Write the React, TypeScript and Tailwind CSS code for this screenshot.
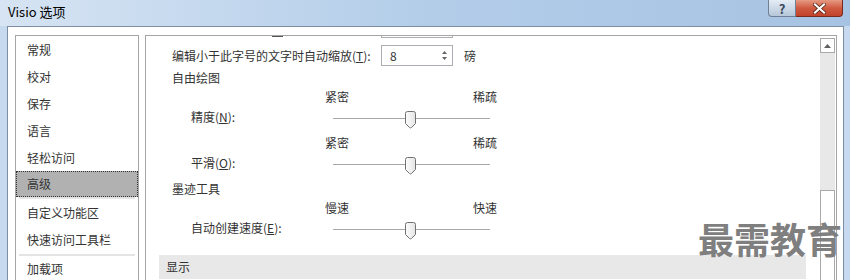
import React from 'react';

const NAV_ITEMS = ['常规', '校对', '保存', '语言', '轻松访问'];

function Thumb() {
  return (
    <svg width="12" height="18" viewBox="0 0 12 18" className="absolute left-[72px] top-[6px]">
      <defs>
        <linearGradient id="thumbFill" x1="0" y1="0" x2="1" y2="0">
          <stop offset="0" stopColor="#fdfdfd" />
          <stop offset="1" stopColor="#e4e4e4" />
        </linearGradient>
      </defs>
      <path
        d="M0.5 2.5 Q0.5 0.5 2.5 0.5 H8.5 Q10.5 0.5 10.5 2.5 V12.5 L6.5 16.5 Q5.5 17.3 4.5 16.5 L0.5 12.5 Z"
        fill="url(#thumbFill)"
        stroke="#707070"
      />
    </svg>
  );
}

function SliderGroup({ label, left, right }: { label: React.ReactNode; left: string; right: string }) {
  return (
    <div className="flex flex-col">
      <div className="flex h-[16px] items-center pl-[26px]">
        <div className="w-[153px]" />
        <div className="flex w-[172px] justify-between">
          <span>{left}</span>
          <span>{right}</span>
        </div>
      </div>
      <div className="flex h-[24px] items-center pl-[26px]">
        <div className="w-[153px] pl-[19px]">{label}</div>
        <div className="relative ml-[8px] h-[24px] w-[157px]">
          <div className="mt-[13px] h-px w-full bg-[#a8a8a8]" />
          <Thumb />
        </div>
      </div>
    </div>
  );
}

export default function App() {
  return (
    <div className="relative h-[280px] w-[850px] overflow-hidden bg-[#c6d9ee] font-['Noto_Sans_CJK_SC',sans-serif] text-[12px] text-[#333]">
      {/* title bar */}
      <div className="flex h-[26px] bg-gradient-to-r from-[#d6e4f3] via-[#b3cde9] to-[#a7c3e3]">
        <div className="pl-[8px] pt-[4px] text-[13px] leading-[16px] text-black">Visio 选项</div>
        <div className="ml-auto mr-[7px] flex h-[17px]">
          <div className="flex w-[28px] items-center justify-center rounded-bl-[4px] border border-t-0 border-[#6f8096] bg-gradient-to-b from-[#e4ecf5] to-[#b6c7da] text-[13px] font-bold leading-none text-[#3c4a5c]">
            ?
          </div>
          <div className="flex w-[47px] items-center justify-center rounded-br-[4px] border border-l-0 border-t-0 border-[#7a2a1c] bg-gradient-to-b from-[#e69a84] via-[#cf5a40] to-[#c0432a]">
            <svg width="13" height="11" viewBox="0 0 13 11">
              <path d="M2 1.5 L11 9.5 M11 1.5 L2 9.5" stroke="#4a1a10" strokeWidth="3.6" strokeLinecap="square" />
              <path d="M2 1.5 L11 9.5 M11 1.5 L2 9.5" stroke="#fff" strokeWidth="2.2" strokeLinecap="square" />
            </svg>
          </div>
        </div>
      </div>

      {/* window body */}
      <div className="flex h-[254px] pl-[7px] pr-[6px]">
        <div className="flex flex-1 gap-[6px] border-x border-t border-[#7d8ea3] bg-white pl-[7px] pr-[6px] pt-[8px]">
          {/* left nav */}
          <div className="flex w-[124px] flex-col border border-b-0 border-[#a5a5a5]">
            {NAV_ITEMS.map((item) => (
              <div key={item} className="flex h-[27px] items-center pl-[11px]">
                {item}
              </div>
            ))}
            <div className="flex h-[26px] items-center border border-dotted border-[#333] bg-[#b1b1b1] pl-[10px]">高级</div>
            <div className="mx-[3px] h-[2px] bg-[#e4e4e4]" />
            <div className="mt-px flex h-[26px] items-center pl-[11px]">自定义功能区</div>
            <div className="flex h-[27px] items-center pl-[11px]">快速访问工具栏</div>
            <div className="mx-[3px] mt-px h-[2px] bg-[#e4e4e4]" />
            <div className="mt-px flex h-[23px] items-center pl-[11px]">加载项</div>
          </div>

          {/* right content */}
          <div className="flex flex-1 border border-b-0 border-[#a5a5a5]">
            <div className="flex flex-1 flex-col">
              <div className="flex h-[2px] pl-[126px]">
                <div className="h-[1px] w-[11px] bg-[#555]" />
                <div className="ml-[98px] h-[2px] w-[72px] border-x border-b border-[#abadb3]" />
              </div>
              <div className="mt-[7px] flex h-[21px] items-center pl-[26px]">
                <div className="w-[209px]">
                  编辑小于此字号的文字时自动缩放(<u>T</u>):
                </div>
                <div className="flex h-[21px] w-[72px] items-center border border-[#abadb3] pl-[8px] pr-[4px]">
                  <span className="flex-1">8</span>
                  <svg width="7" height="13" viewBox="0 0 7 13">
                    <path d="M3.5 2 L6 5 H1 Z" fill="#666" />
                    <path d="M3.5 11 L6 8 H1 Z" fill="#666" />
                  </svg>
                </div>
                <span className="ml-[11px]">磅</span>
              </div>
              <div className="mt-[2px] flex h-[20px] items-center pl-[26px]">自由绘图</div>
              <div className="mt-px">
                <SliderGroup
                  label={
                    <>
                      精度(<u>N</u>):
                    </>
                  }
                  left="紧密"
                  right="稀疏"
                />
              </div>
              <div className="mt-[6px]">
                <SliderGroup
                  label={
                    <>
                      平滑(<u>O</u>):
                    </>
                  }
                  left="紧密"
                  right="稀疏"
                />
              </div>
              <div className="mt-[4px] flex h-[20px] items-center pl-[26px]">墨迹工具</div>
              <div className="mt-px">
                <SliderGroup
                  label={
                    <>
                      自动创建速度(<u>E</u>):
                    </>
                  }
                  left="慢速"
                  right="快速"
                />
              </div>
              <div className="mx-[13px] mt-[15px] flex h-[24px] items-center bg-[#e8e8e8] pl-[7px]">显示</div>
            </div>

            {/* scrollbar */}
            <div className="flex w-[17px] flex-col px-px pt-[2px]">
              <div className="flex h-[15px] items-center justify-center border border-[#a9a9a9] bg-white">
                <svg width="7" height="4" viewBox="0 0 7 4">
                  <path d="M3.5 0 L7 4 H0 Z" fill="#606060" />
                </svg>
              </div>
              <div className="h-[137px] bg-[#e8e8e8]" />
              <div className="flex-1 border border-b-0 border-[#a9a9a9] bg-white" />
            </div>
          </div>
        </div>
      </div>

      {/* watermark */}
      <div className="absolute left-[698px] top-[220px] text-[36px] font-bold leading-none text-[#7f7f7f]">最需教育</div>
    </div>
  );
}
